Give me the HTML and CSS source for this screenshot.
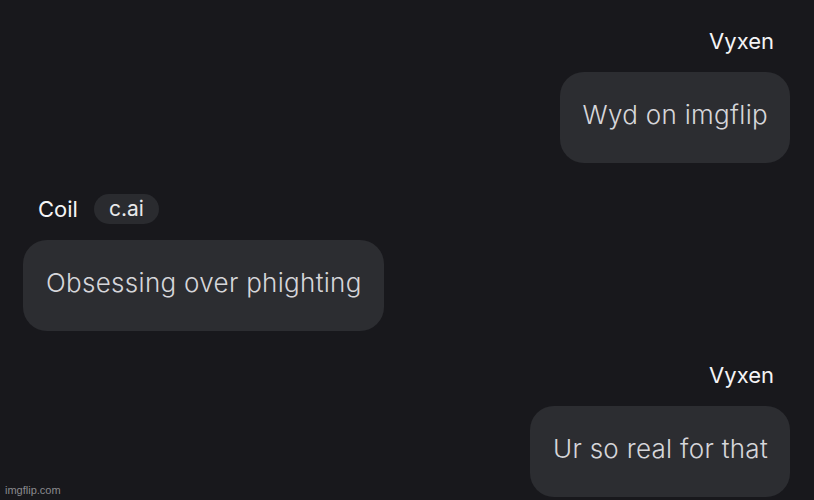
FILE: index.html
```html
<!DOCTYPE html>
<html>
<head>
<meta charset="utf-8">
<link rel="stylesheet" href="styles.css">
</head>
<body>
<div class="chat">
  <div class="msg mine first">
    <div class="name">Vyxen</div>
    <div class="bubble">Wyd on imgflip</div>
  </div>
  <div class="msg theirs">
    <div class="head"><span class="name">Coil</span><span class="tag">c.ai</span></div>
    <div class="bubble">Obsessing over phighting</div>
  </div>
  <div class="msg mine">
    <div class="name">Vyxen</div>
    <div class="bubble">Ur so real for that</div>
  </div>
</div>
<div class="watermark">imgflip.com</div>
</body>
</html>
```

FILE: styles.css
```css
html, body {
  margin: 0;
  padding: 0;
  background: #18181c;
  height: 100%;
  overflow: hidden;
}
body {
  font-family: Inter, "Noto Sans", sans-serif;
  position: relative;
}
.chat {
  display: flex;
  flex-direction: column;
  padding: 29px 24px 0 23px;
}
.msg {
  display: flex;
  flex-direction: column;
}
.msg.mine {
  align-items: flex-end;
  margin-top: 32px;
}
.msg.mine.first {
  margin-top: 0;
}
.msg.theirs {
  align-items: flex-start;
  margin-top: 31px;
}
.name {
  color: #f4f4f6;
  font-size: 22px;
  line-height: 24px;
  padding: 0 16px;
}
.msg.mine .name {
  margin-bottom: 19px;
}
.head {
  display: flex;
  align-items: center;
  padding-left: 15px;
  margin-bottom: 16px;
}
.head .name {
  padding: 0;
}
.tag {
  margin-left: 16px;
  background: #2a2b2f;
  color: #e8e8ea;
  font-size: 21px;
  line-height: 30px;
  height: 30px;
  padding: 0 15px;
  border-radius: 15px;
}
.bubble {
  background: #2c2d31;
  color: #d6d6da;
  font-size: 26px;
  font-weight: 300;
  letter-spacing: 0.3px;
  line-height: 30px;
  padding: 28px 22px 33px 23px;
  border-radius: 24px;
}
.watermark {
  position: absolute;
  left: 5px;
  bottom: 3px;
  color: #8a8a8e;
  font-family: "Liberation Sans", Arial, sans-serif;
  font-size: 11px;
  line-height: 13px;
}
```
